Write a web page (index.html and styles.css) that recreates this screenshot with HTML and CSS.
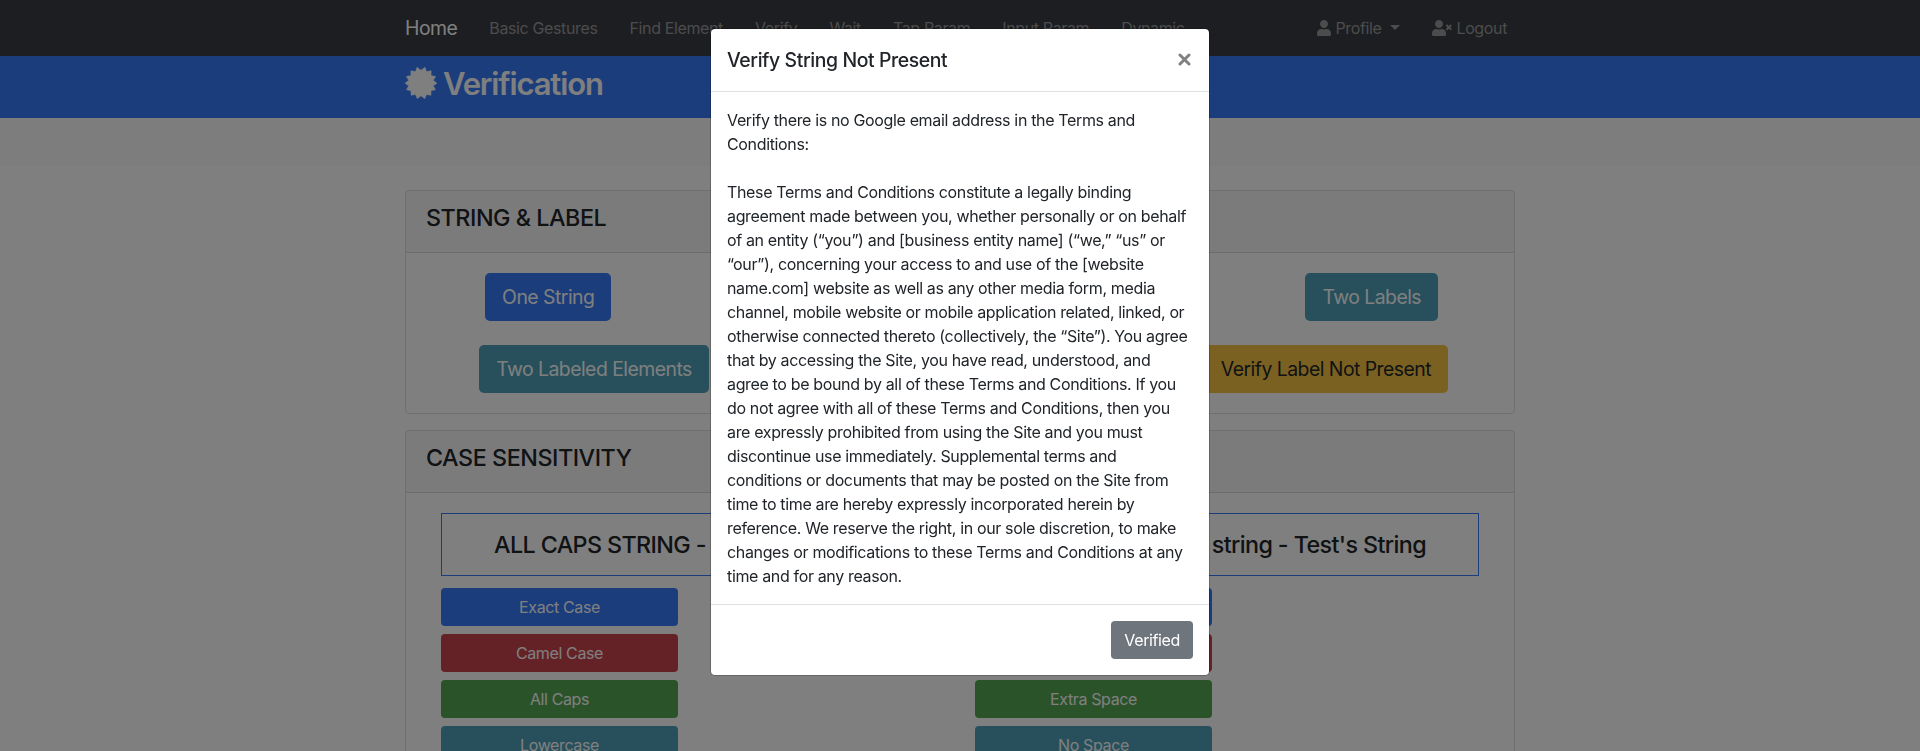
FILE: index.html
```html
<!DOCTYPE html>
<html lang="en">
<head>
<meta charset="utf-8">
<title>Verification</title>
<link rel="stylesheet" href="styles.css">
</head>
<body>
<nav class="navbar">
  <div class="container navbar-inner">
    <a class="brand">Home</a>
    <div class="nav-links">
      <a>Basic Gestures</a><a>Find Element</a><a>Verify</a><a>Wait</a><a>Tap Param</a><a>Input Param</a><a>Dynamic</a>
    </div>
    <div class="nav-user">
      <a><svg class="icon-user" viewBox="0 0 448 512"><path d="M224 256c70.7 0 128-57.300 128-128S294.700 0 224 0 96 57.300 96 128s57.300 128 128 128zm89.600 32h-16.700c-22.200 10.200-46.900 16-72.900 16s-50.600-5.800-72.900-16h-16.700C60.200 288 0 348.200 0 422.400V464c0 26.500 21.500 48 48 48h352c26.500 0 48-21.500 48-48v-41.600c0-74.200-60.200-134.400-134.400-134.400z"/></svg>Profile<span class="caret"></span></a>
      <a><svg class="icon-logout" viewBox="0 0 640 512"><path d="M224 256c70.700 0 128-57.300 128-128S294.700 0 224 0 96 57.300 96 128s57.300 128 128 128zm89.600 32h-16.700c-22.200 10.200-46.900 16-72.900 16s-50.600-5.800-72.900-16h-16.700C60.200 288 0 348.200 0 422.400V464c0 26.500 21.500 48 48 48h352c26.500 0 48-21.500 48-48v-41.600c0-74.200-60.200-134.400-134.400-134.400z"/><path class="cross" d="M460 160l155 150M615 160L460 310"/></svg>Logout</a>
    </div>
  </div>
</nav>
<header class="title-bar">
  <div class="container title-inner">
    <svg class="icon-badge" viewBox="-16 -16 32 32"><path d="M0-12.700L4-15.700 5.500-11.500 10.200-12.200 10-7.600 14.700-6.400 12.300-2.700 16 .300 12.300 2.800 14.500 6.800 10 7.700 10 12.300 5.600 11.500 3.700 15.700 0 12.800-3.700 15.700-5.600 11.500-10 12.300-10 7.700-14.500 6.800-12.300 2.800-16 .300-12.300-2.700-14.700-6.400-10-7.600-10.200-12.200-5.500-11.500-4-15.700Z"/></svg>
    <h2>Verification</h2>
  </div>
</header>
<div class="strip"></div>
<main class="container content">
  <section class="card">
    <div class="card-header"><h4>STRING &amp; LABEL</h4></div>
    <div class="card-body">
      <div class="row four">
        <a class="btn btn-lg blue">One String</a>
        <a class="btn btn-lg teal last">Two Labels</a>
      </div>
      <div class="row three">
        <a class="btn btn-lg teal">Two Labeled Elements</a>
        <a class="btn btn-lg yellow last">Verify Label Not Present</a>
      </div>
    </div>
  </section>
  <section class="card">
    <div class="card-header"><h4>CASE SENSITIVITY</h4></div>
    <div class="card-body case-body">
      <div class="sample"><span>ALL CAPS STRING -</span><span>string - Test's String</span></div>
      <div class="case-columns">
        <div class="stack">
          <a class="btn blue">Exact Case</a><a class="btn red">Camel Case</a><a class="btn green">All Caps</a><a class="btn teal">Lowercase</a>
        </div>
        <div class="stack">
          <a class="btn blue"></a><a class="btn red"></a><a class="btn green">Extra Space</a><a class="btn teal">No Space</a>
        </div>
      </div>
    </div>
  </section>
</main>
<div class="backdrop">
  <div class="modal" role="dialog">
    <div class="modal-header">
      <h5>Verify String Not Present</h5>
      <svg class="icon-close" viewBox="0 0 13 13"><path d="M2 2l9 9M11 2l-9 9"/></svg>
    </div>
    <div class="modal-body">Verify there is no Google email address in the Terms and<br>Conditions:<br><br>These Terms and Conditions constitute a legally binding<br>agreement made between you, whether personally or on behalf<br>of an entity (“you”) and [business entity name] (“we,” “us” or<br>“our”), concerning your access to and use of the [website<br>name.com] website as well as any other media form, media<br>channel, mobile website or mobile application related, linked, or<br>otherwise connected thereto (collectively, the “Site”). You agree<br>that by accessing the Site, you have read, understood, and<br>agree to be bound by all of these Terms and Conditions. If you<br>do not agree with all of these Terms and Conditions, then you<br>are expressly prohibited from using the Site and you must<br>discontinue use immediately. Supplemental terms and<br>conditions or documents that may be posted on the Site from<br>time to time are hereby expressly incorporated herein by<br>reference. We reserve the right, in our sole discretion, to make<br>changes or modifications to these Terms and Conditions at any<br>time and for any reason.</div>
    <div class="modal-footer"><a class="btn gray">Verified</a></div>
  </div>
</div>
</body>
</html>
```
FILE: styles.css
```css
* { box-sizing: border-box; }
html { height: 100%; overflow: hidden; }
body { height: 100%; overflow: hidden; margin: 0; background: #fff; color: #212529; font: 16px/24px Inter, "Liberation Sans", sans-serif; letter-spacing: -0.37px; }
h2, h4, h5 { margin: 0; }
.container { width: 1110px; margin: 0 auto; }
.navbar { height: 56px; background: #3a3c42; color: #98999b; }
.navbar-inner { display: flex; align-items: center; height: 56px; }
.brand { color: #fff; font-size: 19.4px; letter-spacing: -0.5px; margin-right: 32px; }
.nav-links { display: flex; gap: 32px; white-space: nowrap; }
.nav-user { display: flex; gap: 32px; margin-left: auto; padding-right: 8px; }
.nav-user a { display: flex; align-items: center; }
.nav-user svg { height: 16px; fill: currentColor; margin-right: 4px; }
.icon-user { width: 14px; }
.icon-logout { width: 20px; }
.nav-user .cross { fill: none; stroke: currentColor; stroke-width: 62; }
.caret { border: 5px solid transparent; border-top-color: currentColor; border-bottom: 0; margin: -2px 0 0 9px; }
.title-bar { height: 62px; background: #367af8; color: #fff; }
.title-inner { display: flex; align-items: flex-start; gap: 6px; padding-top: 9px; }
.title-inner h2 { font-size: 31px; line-height: 38px; font-weight: 600; letter-spacing: -1.12px; }
.icon-badge { width: 32px; height: 32px; margin-top: 2px; fill: #fff; stroke: #fff; stroke-width: .5; stroke-linejoin: round; }
.strip { height: 48px; background: #fafafa; }
.content { padding-top: 24px; }
.card { border: 1px solid rgba(0,0,0,.125); border-radius: 4px; margin-bottom: 16px; }
.card-header { height: 62px; padding: 12px 20px; background: rgba(0,0,0,.03); border-bottom: 1px solid rgba(0,0,0,.125); }
.card-header h4 { font-size: 23.3px; line-height: 29px; font-weight: 550; letter-spacing: -0.45px; }
.card-body { padding: 20px 5px; }
.row { display: grid; justify-items: center; }
.four { grid-template-columns: repeat(4, 1fr); }
.three { grid-template-columns: repeat(3, 1fr); margin-top: 24px; }
.last { grid-column: -2; }
.btn { display: block; height: 38px; line-height: 38px; padding: 0 13px; border-radius: 4px; color: #fff; text-align: center; white-space: nowrap; }
.btn-lg { height: 48px; line-height: 48px; padding: 0 17px; border-radius: 5px; font-size: 19.4px; letter-spacing: -0.52px; }
.blue { background: #367af8; }
.red { background: #cb444c; }
.green { background: #55a655; }
.teal { background: #4ea1b8; }
.yellow { background: #f6c343; color: #212529; }
.gray { background: #6e757c; }
.case-body { padding: 20px 35px; }
.sample { height: 63px; border: 1px solid #367af8; display: flex; align-items: center; justify-content: space-between; padding: 0 52px; font-size: 23.3px; font-weight: 550; letter-spacing: -0.6px; }
.case-columns { display: grid; grid-template-columns: 237px 237px; column-gap: 297px; margin-top: 12px; }
.stack { display: grid; gap: 8px; }
.backdrop { position: fixed; inset: 0; background: rgba(0,0,0,.5); display: flex; justify-content: center; align-items: flex-start; padding-top: 28px; }
.modal { width: 500px; background: #fff; background-clip: padding-box; border: 1px solid rgba(0,0,0,.2); border-radius: 5px; }
.modal-header { height: 63px; padding: 16px; display: flex; justify-content: space-between; border-bottom: 1px solid #dee2e6; }
.modal-header h5 { font-size: 19.4px; line-height: 30px; font-weight: 550; letter-spacing: -0.4px; }
.icon-close { width: 13px; height: 13px; margin: 8px 2px 0 0; fill: none; stroke: #808080; stroke-width: 3; stroke-linecap: round; }
.modal-body { padding: 16px; white-space: nowrap; letter-spacing: -0.35px; }
.modal-footer { display: flex; justify-content: flex-end; padding: 16px; border-top: 1px solid #dee2e6; }
```
